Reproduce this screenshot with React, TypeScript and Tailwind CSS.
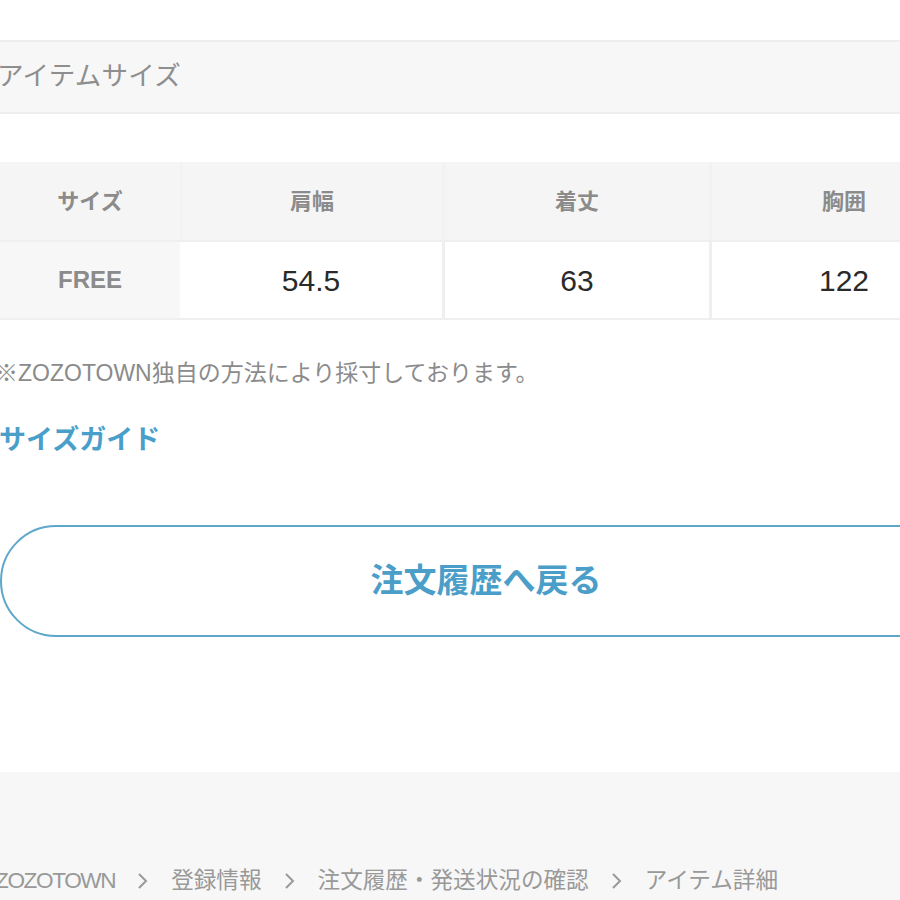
import React from "react";

const font = { fontFamily: '"Liberation Sans", "Noto Sans CJK JP", sans-serif' };

function Chevron() {
  return (
    <svg width="14" height="22" viewBox="0 0 14 22" className="shrink-0">
      <polyline points="3,4 10,11 3,18" fill="none" stroke="#9a9a9a" strokeWidth="2" />
    </svg>
  );
}

export default function App() {
  const headCell = "flex items-center justify-center text-[22px] text-[#8b8b8b] font-bold";
  const num = "flex items-center justify-center text-[30px] text-[#2a2a2a]";
  return (
    <div className="w-[900px] h-[900px] overflow-hidden bg-white relative" style={font}>
      <div className="h-[40px]" />
      {/* section header */}
      <div className="h-[74px] bg-[#f7f7f7] border-y-2 border-[#eeeeee] flex items-center">
        <span className="text-[26.5px] text-[#8e8e8e] ml-[-3px] tracking-[0.3px]">アイテムサイズ</span>
      </div>
      <div className="h-[48px]" />
      {/* table */}
      <div className="w-[980px]">
        <div className="flex h-[78px] bg-[#f5f5f5]">
          <div className={`${headCell} w-[180px]`}>サイズ</div>
          <div className={`${headCell} w-[262px] border-l-2 border-[#f2f2f2]`}>肩幅</div>
          <div className={`${headCell} w-[267px] border-l-[3px] border-[#f2f2f2]`}>着丈</div>
          <div className={`${headCell} w-[267px] border-l-[3px] border-[#f2f2f2]`}>胸囲</div>
        </div>
        <div className="flex h-[80px] border-t-2 border-b-2 border-[#efefef]">
          <div className="w-[180px] bg-[#f7f7f7] flex items-center justify-center text-[24px] text-[#8b8b8b] font-bold">FREE</div>
          <div className={`w-[262px] bg-white ${num}`}>54.5</div>
          <div className={`w-[267px] bg-white border-l-[3px] border-[#efefef] ${num}`}>63</div>
          <div className={`w-[267px] bg-white border-l-[3px] border-[#efefef] ${num}`}>122</div>
        </div>
      </div>
      {/* note */}
      <div className="mt-[38px] h-[30px] flex items-center">
        <span className="text-[23px] text-[#8b8b8b] ml-[-5px] whitespace-nowrap">※ZOZOTOWN独自の方法により採寸しております。</span>
      </div>
      <div className="mt-[37px] h-[30px] flex items-center">
        <span className="text-[27px] font-bold text-[#4a9fca] ml-[-1px]">サイズガイド</span>
      </div>
      {/* button */}
      <div className="mt-[70px] w-[972px] h-[112px] rounded-[56px] border-2 border-[#5ea6ca] flex items-center justify-center">
        <span className="text-[33px] font-bold text-[#4b9ec8]">注文履歴へ戻る</span>
      </div>
      {/* footer */}
      <div className="mt-[135px] h-[200px] bg-[#f7f7f7]">
        <div className="pt-[92px] flex items-center gap-[21px] whitespace-nowrap text-[22.6px] text-[#999999] ml-[-5px]">
          <span className="tracking-[-1.4px]">ZOZOTOWN</span>
          <Chevron />
          <span>登録情報</span>
          <Chevron />
          <span>注文履歴・発送状況の確認</span>
          <Chevron />
          <span>アイテム詳細</span>
        </div>
      </div>
    </div>
  );
}
